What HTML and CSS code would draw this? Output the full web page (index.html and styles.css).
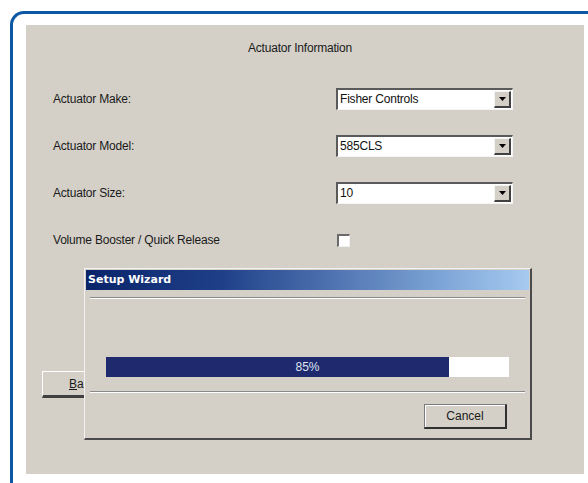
FILE: index.html
```html
<!DOCTYPE html>
<html lang="en">
<head>
<meta charset="utf-8">
<title>Actuator Information</title>
<link rel="stylesheet" href="styles.css">
</head>
<body>
<div class="frame">
  <div class="panel">
    <div class="panel-title">Actuator Information</div>

    <div class="fields">
      <div class="field">
        <span class="label">Actuator Make:</span>
        <div class="combo">
          <span class="combo-value">Fisher Controls</span>
          <span class="combo-btn"><svg width="7" height="4" viewBox="0 0 7 4"><path d="M0 0h7L3.5 4z" fill="#000"/></svg></span>
        </div>
      </div>
      <div class="field">
        <span class="label">Actuator Model:</span>
        <div class="combo">
          <span class="combo-value">585CLS</span>
          <span class="combo-btn"><svg width="7" height="4" viewBox="0 0 7 4"><path d="M0 0h7L3.5 4z" fill="#000"/></svg></span>
        </div>
      </div>
      <div class="field">
        <span class="label">Actuator Size:</span>
        <div class="combo">
          <span class="combo-value">10</span>
          <span class="combo-btn"><svg width="7" height="4" viewBox="0 0 7 4"><path d="M0 0h7L3.5 4z" fill="#000"/></svg></span>
        </div>
      </div>
      <div class="field">
        <span class="label">Volume Booster / Quick Release</span>
        <span class="checkbox"></span>
      </div>
    </div>

    <div class="nav">
      <button class="btn btn-back" type="button"><u>B</u>ack</button>
    </div>

    <div class="dialog">
      <div class="dialog-title">Setup Wizard</div>
      <div class="dialog-body">
        <div class="etched"></div>
        <div class="progress">
          <div class="progress-fill" style="width:85%"></div>
          <span class="progress-text">85%</span>
        </div>
        <div class="etched etched-low"></div>
        <div class="dialog-actions">
          <button class="btn btn-cancel" type="button">Cancel</button>
        </div>
      </div>
    </div>
  </div>
</div>
</body>
</html>
```

FILE: styles.css
```css
html, body {
  margin: 0;
  padding: 0;
  background: #ffffff;
}

body {
  font-family: "Liberation Sans", Arial, sans-serif;
  font-size: 12px;
  color: #1a1a1a;
  overflow: hidden;
}

/* rounded blue frame, open on the right */
.frame {
  margin: 11px 0 0 10px;
  width: 561px;
  height: 480px;
  padding: 11px 3px 0 13px;
  border-top: 3px solid #0b58a4;
  border-left: 3px solid #0b58a4;
  border-top-left-radius: 14px;
}

.panel {
  position: relative;
  width: 558px;
  height: 449px;
  background: #d4d0c8;
}

.panel-title {
  padding: 16px 10px 0 0;
  line-height: 14px;
  text-align: center;
  letter-spacing: -0.2px;
}

.fields {
  display: flex;
  flex-direction: column;
  gap: 25px;
  margin-top: 33px;
  padding-left: 27px;
}

.field {
  display: flex;
  align-items: center;
  height: 22px;
}

.label {
  width: 283px;
  flex: none;
  letter-spacing: -0.2px;
}

/* sunken combo box */
.combo {
  box-sizing: border-box;
  display: flex;
  align-items: stretch;
  width: 177px;
  height: 22px;
  background: #fff;
  border-style: solid;
  border-width: 2px 1px 1px 2px;
  border-color: #5a5a5a #f4f4f4 #f4f4f4 #5a5a5a;
}

.combo-value {
  flex: 1;
  padding-left: 2px;
  line-height: 18px;
  color: #111;
  letter-spacing: -0.2px;
}

.combo-btn {
  box-sizing: border-box;
  width: 17px;
  margin: 1px 1px 1px 0;
  display: flex;
  align-items: center;
  justify-content: center;
  background: #d4d0c8;
  border-style: solid;
  border-width: 1px 2px 2px 1px;
  border-color: #f4f4f4 #404040 #404040 #f4f4f4;
}

.checkbox {
  box-sizing: border-box;
  display: block;
  width: 13px;
  height: 13px;
  margin-left: 1px;
  background: #fff;
  border-style: solid;
  border-width: 2px 1px 1px 2px;
  border-color: #6a6a6a #f0f0f0 #f0f0f0 #6a6a6a;
}

.nav {
  margin-top: 120px;
  padding-left: 16px;
}

.btn {
  box-sizing: border-box;
  font-family: "Liberation Sans", Arial, sans-serif;
  font-size: 12px;
  color: #1a1a1a;
  background: #d4d0c8;
  padding: 0;
  border-style: solid;
  border-color: #ffffff #404040 #404040 #ffffff;
}

.btn-back {
  width: 82px;
  height: 27px;
  border-width: 1px 1px 3px 1px;
  padding-left: 26px;
  text-align: left;
}

/* floating progress window */
.dialog {
  position: absolute;
  left: 58px;
  top: 243px;
  box-sizing: border-box;
  width: 448px;
  height: 172px;
  padding: 1px;
  background: #d4d0c8;
  border-style: solid;
  border-width: 1px 2px 2px 1px;
  border-color: #f2f2f2 #4a4a4a #4a4a4a #f2f2f2;
}

.dialog-title {
  height: 20px;
  line-height: 20px;
  padding-left: 2px;
  background: linear-gradient(to right, #0a246a 0%, #1e3f88 30%, #7da4d6 80%, #a6caf0 100%);
  color: #fff;
  font-family: "DejaVu Sans", Tahoma, sans-serif;
  font-weight: bold;
  font-size: 11px;
}

.dialog-body {
  padding: 7px 4px 0 4px;
}

.etched {
  height: 0;
  border-top: 1px solid #8a8a8a;
  border-bottom: 1px solid #ffffff;
}

.etched-low {
  margin-top: 14px;
}

.progress {
  position: relative;
  height: 20px;
  margin: 58px 16px 0 16px;
  background: #ffffff;
}

.progress-fill {
  height: 100%;
  background: #1f2a6e;
}

.progress-text {
  position: absolute;
  inset: 0;
  text-align: center;
  line-height: 20px;
  color: #dfe4f2;
  font-size: 12px;
}

.dialog-actions {
  display: flex;
  justify-content: flex-end;
  padding: 11px 18px 0 0;
}

.btn-cancel {
  width: 83px;
  height: 25px;
  border-width: 1px 2px 2px 1px;
  border-color: #7a7a7a #303030 #303030 #7a7a7a;
  box-shadow: inset 1px 1px 0 #ffffff;
}
```
